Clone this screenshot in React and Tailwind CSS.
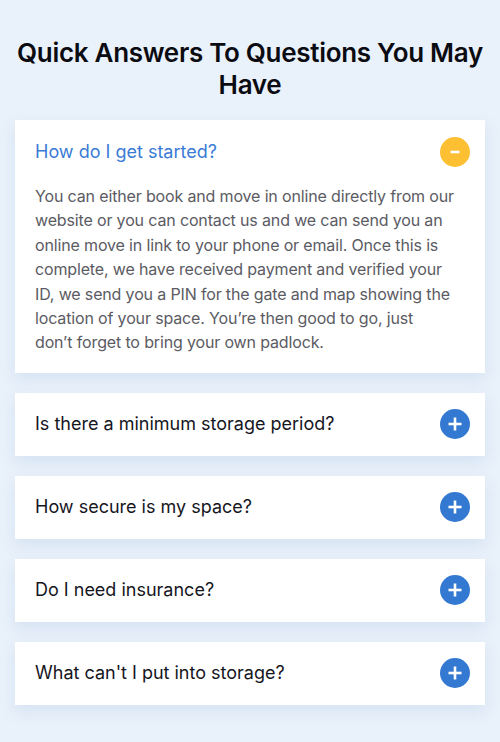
import React, { useState } from "react";

const faqs = [
  {
    q: "How do I get started?",
    a: (
      <>
        You can either book and move in online directly from our website or you
        can contact us and we can send you an online move in link to your phone
        or email. Once this is complete, we have received payment and verified
        your ID, we send you a PIN for the gate and map showing the location of
        your space. You{"\u2019"}re then good to go, just
        <br />
        don{"\u2019"}t forget to bring your own padlock.
      </>
    ),
  },
  { q: "Is there a minimum storage period?", a: null },
  { q: "How secure is my space?", a: null },
  { q: "Do I need insurance?", a: null },
  { q: "What can't I put into storage?", a: null },
];

function Icon({ open }) {
  return (
    <span
      className={
        open
          ? "flex h-[30px] w-[30px] shrink-0 items-center justify-center rounded-full bg-[#fdc032]"
          : "flex h-[30px] w-[30px] shrink-0 items-center justify-center rounded-full bg-[#3479d1]"
      }
    >
      <svg width="14" height="14" viewBox="0 0 14 14">
        {open ? (
          <path d="M2.5 7h9" stroke="#fff" strokeWidth="2.6" />
        ) : (
          <>
            <path d="M0.5 7h13" stroke="#fff" strokeWidth="2.6" />
            <path d="M7 0.5v13" stroke="#fff" strokeWidth="2.6" />
          </>
        )}
      </svg>
    </span>
  );
}

export default function App() {
  const [open, setOpen] = useState(0);
  return (
    <div
      className="min-h-[742px] bg-[#e9f1fa] px-[15px] pt-[37px] pb-[36px]"
      style={{ fontFamily: "Inter, 'Open Sans', sans-serif" }}
    >
      <h2 className="mb-[19px] text-center text-[26px] font-semibold leading-[32px] tracking-[-0.3px] text-[#0b0b12]">
        Quick Answers To Questions You May Have
      </h2>
      <div className="flex flex-col gap-[20px]">
        {faqs.map((f, i) => {
          const isOpen = open === i;
          return (
            <div
              key={i}
              className="bg-white shadow-[0_6px_14px_rgba(120,160,210,0.18)]"
            >
              <button
                onClick={() => setOpen(isOpen ? -1 : i)}
                className="flex h-[63px] w-full items-center justify-between pl-[20px] pr-[15px] text-left"
              >
                <span
                  className={
                    isOpen
                      ? "text-[18px] leading-[24px] text-[#3a7bd5]"
                      : "text-[18px] leading-[24px] text-[#16161e]"
                  }
                >
                  {f.q}
                </span>
                <Icon open={isOpen} />
              </button>
              {isOpen && f.a && (
                <p className="px-[20px] pt-[1px] pb-[18px] text-[16px] leading-[24.4px] tracking-[-0.15px] text-[#5b5b63]">
                  {f.a}
                </p>
              )}
            </div>
          );
        })}
      </div>
    </div>
  );
}
